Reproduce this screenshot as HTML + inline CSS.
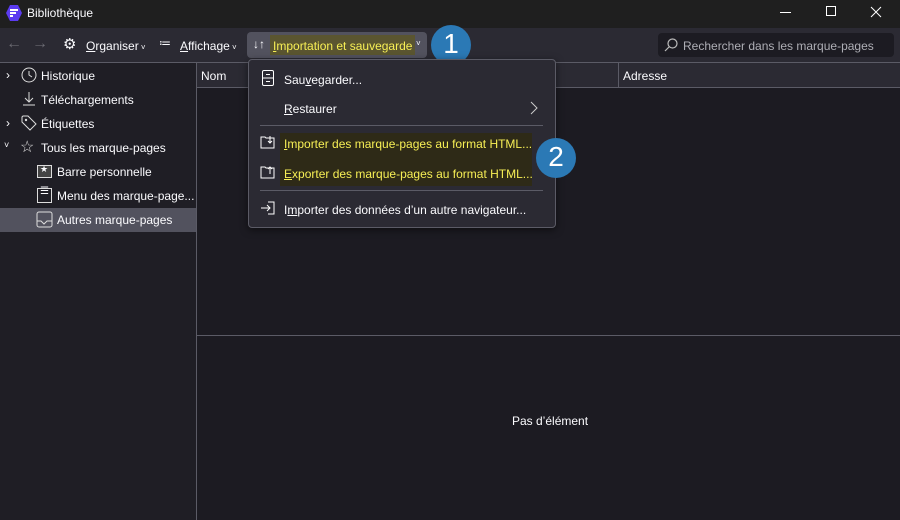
<!DOCTYPE html>
<html><head><meta charset="utf-8"><style>
*{margin:0;padding:0;box-sizing:border-box}
body{width:900px;height:520px;background:#1c1b22;font-family:"Segoe UI","Liberation Sans",sans-serif;font-size:12px;color:#fbfbfe;position:relative;overflow:hidden}
.abs{position:absolute}
.t{position:absolute;white-space:nowrap}
u{text-decoration:underline}
</style></head><body>
<div class="abs" style="left:0;top:0;width:900px;height:28px;background:#1f1f1f"></div>
<svg class="abs" style="left:5px;top:4px" width="18" height="18" viewBox="0 0 18 18"><polygon points="5,1 13,1 17,9 13,17 5,17 1,9" fill="#5b3bf0"/><path d="M5 6h8M5 9h6M5 12h3" stroke="#fff" stroke-width="2"/></svg>
<div class="t" style="left:27px;top:6px;font-size:12px">Bibliothèque</div>
<div class="abs" style="left:780px;top:12px;width:11px;height:1px;background:#fff"></div>
<div class="abs" style="left:826px;top:6px;width:10px;height:10px;border:1px solid #fff"></div>
<svg class="abs" style="left:870px;top:6px" width="12" height="12"><path d="M1 1L11 11M11 1L1 11" stroke="#fff"/></svg>
<div class="abs" style="left:0;top:28px;width:900px;height:34px;background:#2b2a33"></div>
<div class="t" style="left:6px;top:35px;color:#6b6a72;font-size:16px">←</div>
<div class="t" style="left:32px;top:35px;color:#6b6a72;font-size:16px">→</div>
<div class="t" style="left:63px;top:35px;font-size:15px">⚙</div>
<div class="t" style="left:86px;top:39px"><u>O</u>rganiser<span style="font-size:8px"> ˅</span></div>
<div class="t" style="left:159px;top:36px;font-size:12px">≔</div>
<div class="t" style="left:180px;top:39px"><u>A</u>ffichage<span style="font-size:8px"> ˅</span></div>
<div class="abs" style="left:247px;top:32px;width:180px;height:26px;background:#52525e;border-radius:4px"></div>
<div class="t" style="left:253px;top:37px;font-weight:bold">↓↑</div>
<div class="abs" style="left:270px;top:35px;width:145px;height:20px;background:#5a5530"></div>
<div class="t" style="left:273px;top:39px;color:#f7ef55"><u>I</u>mportation et sauvegarde</div>
<div class="t" style="left:416px;top:39px;font-size:8px">˅</div>
<div class="abs" style="left:431px;top:25px;width:40px;height:40px;border-radius:50%;background:#2b79b5"></div>
<div class="t" style="left:431px;top:28px;width:40px;text-align:center;font-size:28px;color:#fff">1</div>
<div class="abs" style="left:658px;top:33px;width:236px;height:24px;background:#1c1b22;border-radius:4px"></div>
<svg class="abs" style="left:664px;top:38px" width="14" height="14"><circle cx="8.5" cy="5.5" r="4.5" fill="none" stroke="#bbb" stroke-width="1.2"/><path d="M5 9L1 13" stroke="#bbb" stroke-width="1.2"/></svg>
<div class="t" style="left:683px;top:39px;color:#aeaeb5">Rechercher dans les marque-pages</div>
<div class="abs" style="left:0;top:62px;width:197px;height:458px;background:#1f1e25;border-right:1px solid #5b5b66;border-top:1px solid #5b5b66"></div>
<div class="abs" style="left:0;top:208px;width:196px;height:24px;background:#52525e"></div>
<div class="t" style="left:6px;top:68px">›</div>
<svg class="abs" style="left:21px;top:67px" width="16" height="16"><circle cx="8" cy="8" r="7" fill="none" stroke="#ddd"/><path d="M8 4v4l3 2" stroke="#ddd" fill="none"/></svg>
<div class="t" style="left:41px;top:69px">Historique</div>
<svg class="abs" style="left:21px;top:91px" width="16" height="16"><path d="M8 1v10M4 7l4 4 4-4M2 14h12" stroke="#ddd" fill="none"/></svg>
<div class="t" style="left:41px;top:93px">Téléchargements</div>
<div class="t" style="left:6px;top:116px">›</div>
<svg class="abs" style="left:21px;top:115px" width="16" height="16"><path d="M1 2v5l8 8 6-6-8-8H2z" stroke="#ddd" fill="none"/><circle cx="5" cy="5" r="1.2" fill="#ddd"/></svg>
<div class="t" style="left:41px;top:117px">Étiquettes</div>
<div class="t" style="left:4px;top:140px;font-size:9px">˅</div>
<div class="t" style="left:20px;top:137px;font-size:16px;color:#ddd">☆</div>
<div class="t" style="left:41px;top:141px">Tous les marque-pages</div>
<div class="abs" style="left:37px;top:165px;width:15px;height:13px;border:1px solid #ddd;background:#444"></div>
<div class="t" style="left:40px;top:164px;font-size:9px">★</div>
<div class="t" style="left:57px;top:165px">Barre personnelle</div>
<div class="abs" style="left:37px;top:188px;width:15px;height:15px;border:1px solid #ddd"></div>
<div class="t" style="left:40px;top:186px;font-size:10px">☰</div>
<div class="t" style="left:57px;top:189px">Menu des marque-page...</div>
<svg class="abs" style="left:36px;top:211px" width="18" height="18"><rect x="1" y="1" width="15" height="15" rx="2" fill="none" stroke="#ddd"/><path d="M1 10h4l3 3 3-3h5" stroke="#ddd" fill="none"/></svg>
<div class="t" style="left:57px;top:213px">Autres marque-pages</div>
<div class="abs" style="left:197px;top:62px;width:703px;height:26px;background:#2b2a33;border-top:1px solid #5b5b66;border-bottom:1px solid #5b5b66"></div>
<div class="abs" style="left:618px;top:63px;width:1px;height:24px;background:#5b5b66"></div>
<div class="t" style="left:201px;top:69px">Nom</div>
<div class="t" style="left:623px;top:69px">Adresse</div>
<div class="abs" style="left:197px;top:335px;width:703px;height:1px;background:#5b5b66"></div>
<div class="t" style="left:512px;top:414px">Pas d’élément</div>
<div class="abs" style="left:248px;top:59px;width:308px;height:169px;background:#2b2a33;border:1px solid #5b5b66;border-radius:4px;box-shadow:0 2px 8px rgba(0,0,0,.5)"></div>
<svg class="abs" style="left:262px;top:70px" width="12" height="16"><rect x="0.5" y="0.5" width="11" height="15" rx="1.5" fill="none" stroke="#fff"/><path d="M1 8h10M4 4.5h4M4 11.5h4" stroke="#fff"/></svg>
<div class="t" style="left:284px;top:73px">Sau<u>v</u>egarder...</div>
<div class="t" style="left:284px;top:102px"><u>R</u>estaurer</div>
<svg class="abs" style="left:530px;top:101px" width="8" height="14"><path d="M1 1l6 6-6 6" stroke="#ccc" fill="none"/></svg>
<div class="abs" style="left:260px;top:125px;width:283px;height:1px;background:#5b5b66"></div>
<div class="abs" style="left:280px;top:133px;width:252px;height:53px;background:#2e2a17"></div>
<svg class="abs" style="left:260px;top:134px" width="16" height="16"><path d="M1 3h4l1 1h8v10H1z" fill="none" stroke="#fff"/><path d="M10 2v7M8 7l2 2 2-2" stroke="#fff" fill="none"/></svg>
<div class="t" style="left:284px;top:137px;color:#f7ef55"><u>I</u>mporter des marque-pages au format HTML...</div>
<svg class="abs" style="left:260px;top:164px" width="16" height="16"><path d="M1 3h4l1 1h8v10H1z" fill="none" stroke="#fff"/><path d="M10 10V3M8 5l2-2 2 2" stroke="#fff" fill="none"/></svg>
<div class="t" style="left:284px;top:167px;color:#f7ef55"><u>E</u>xporter des marque-pages au format HTML...</div>
<div class="abs" style="left:260px;top:190px;width:283px;height:1px;background:#5b5b66"></div>
<svg class="abs" style="left:260px;top:200px" width="16" height="16"><path d="M8 2h6v12H8M1 8h9M7 5l3 3-3 3" stroke="#fff" fill="none"/></svg>
<div class="t" style="left:284px;top:203px">I<u>m</u>porter des données d’un autre navigateur...</div>
<div class="abs" style="left:536px;top:138px;width:40px;height:40px;border-radius:50%;background:#2b79b5"></div>
<div class="t" style="left:536px;top:141px;width:40px;text-align:center;font-size:28px;color:#fff">2</div>
</body></html>
